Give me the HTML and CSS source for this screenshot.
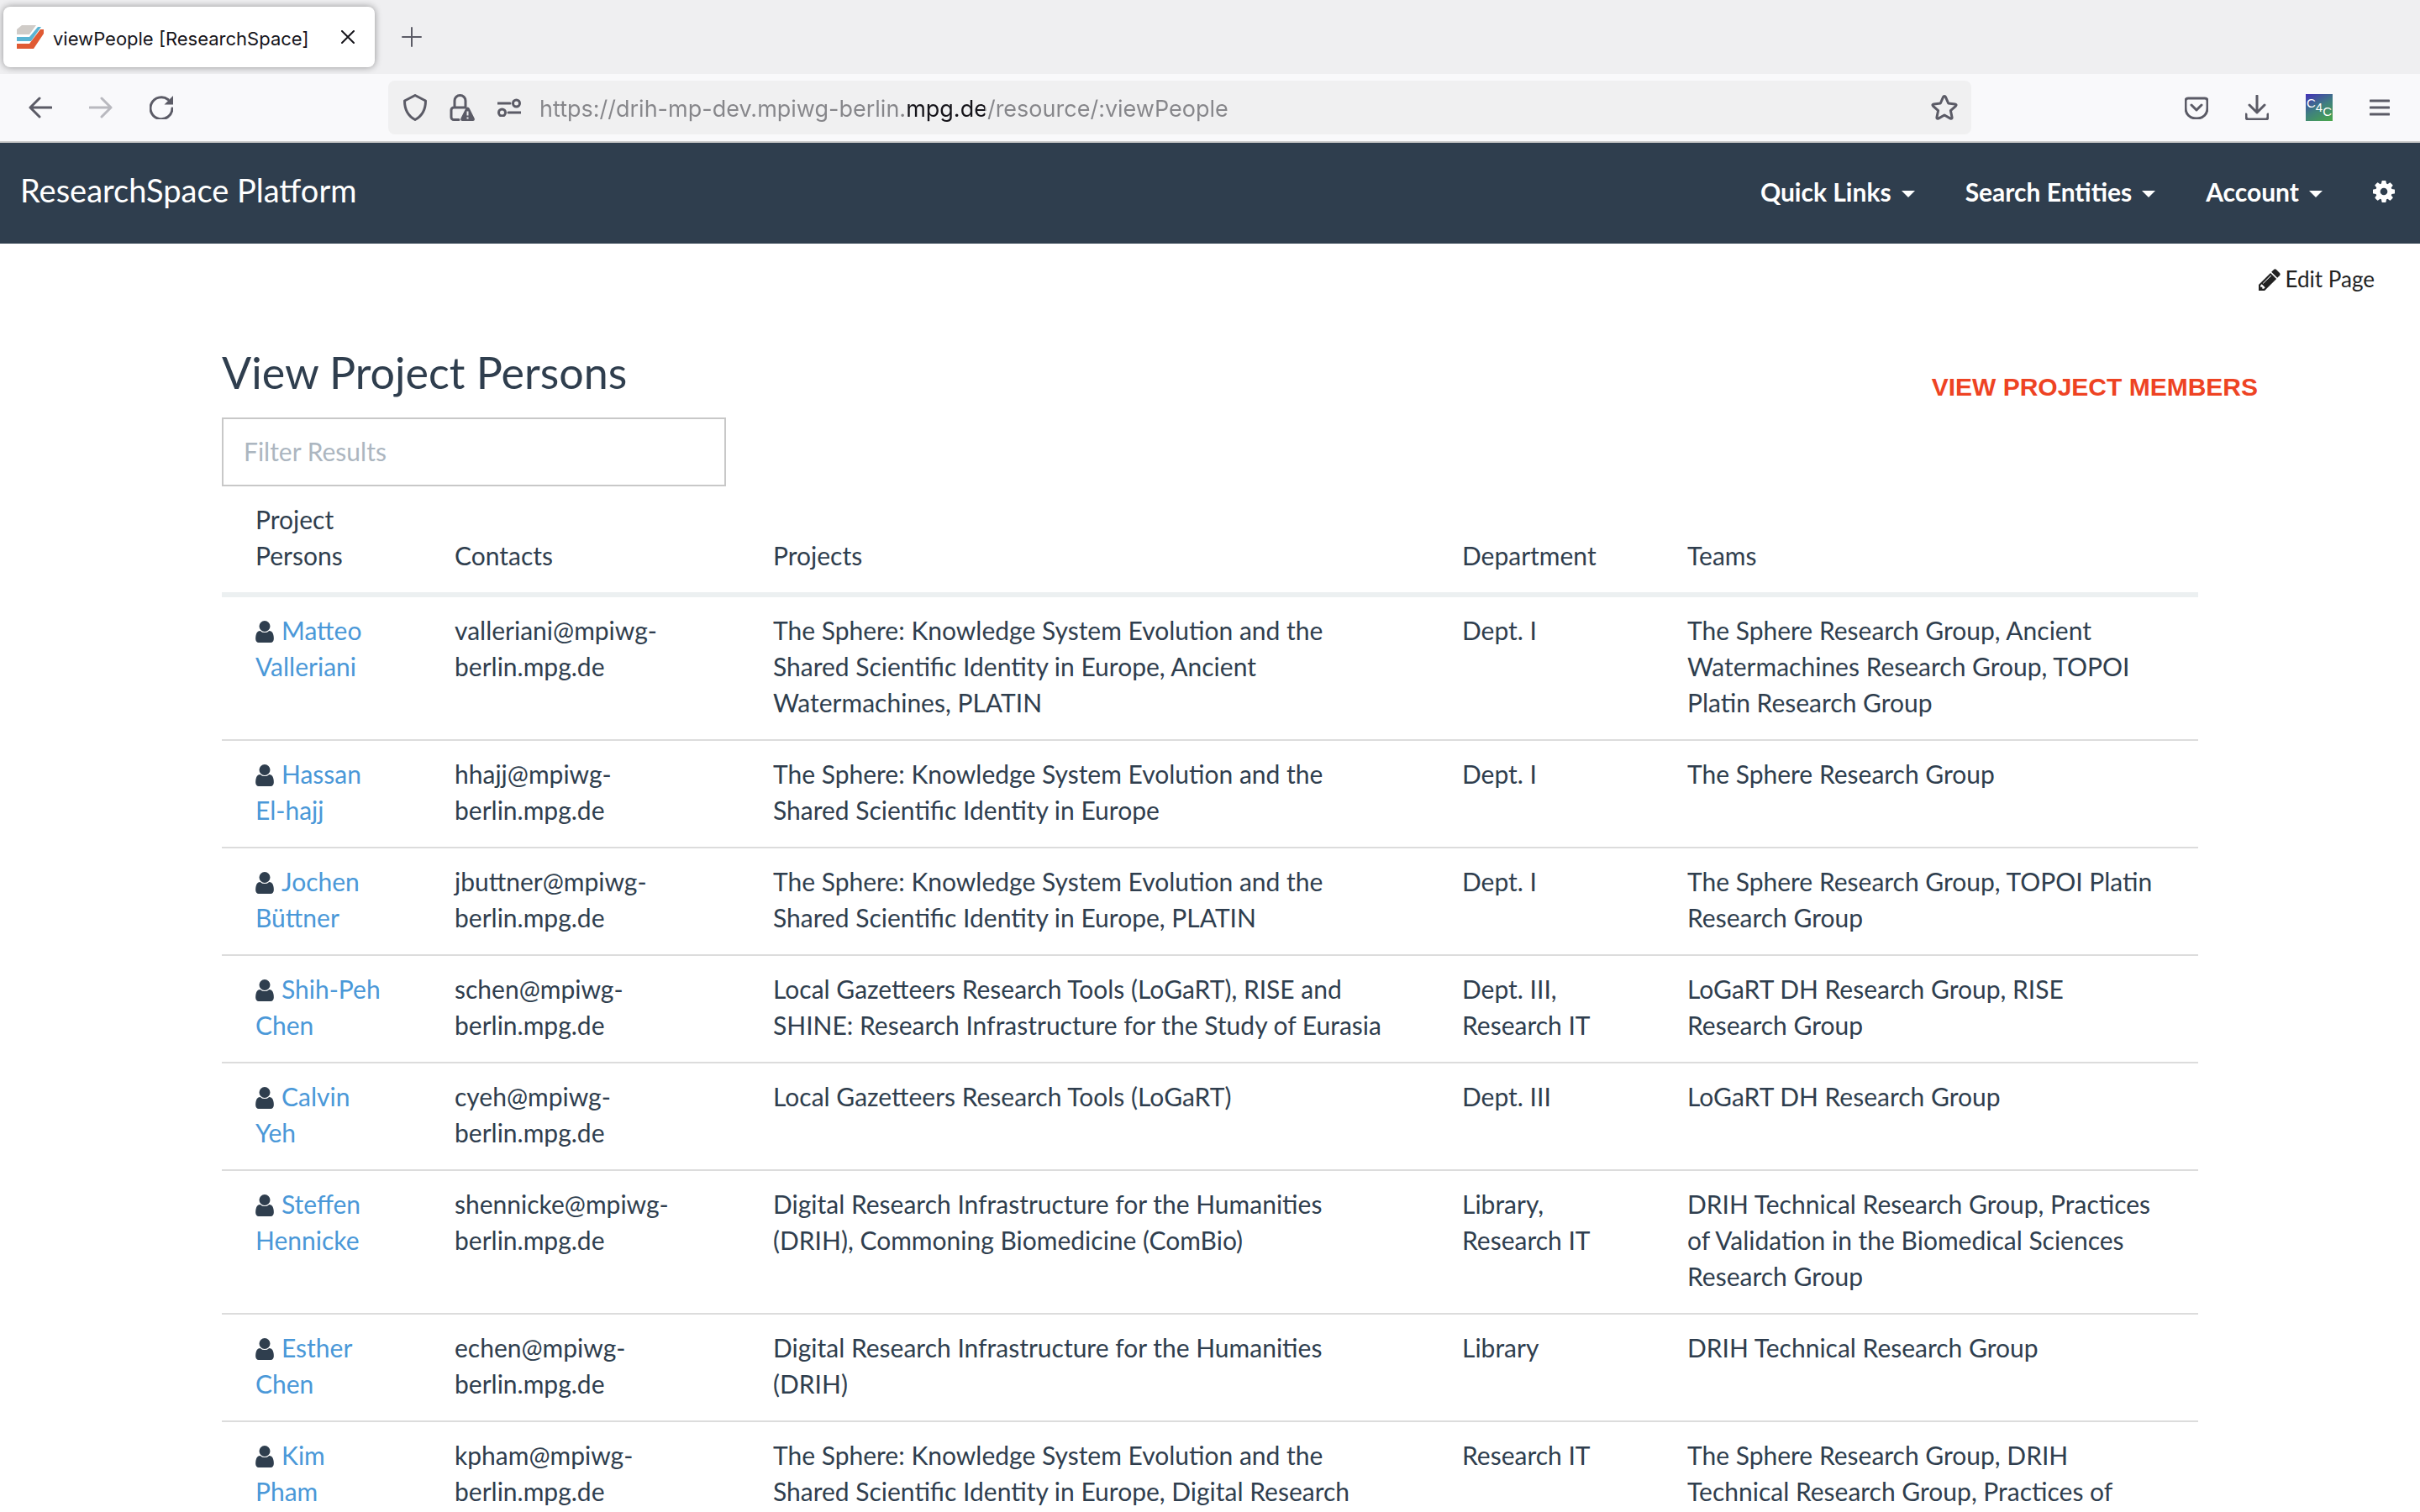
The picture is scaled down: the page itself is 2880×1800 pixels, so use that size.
FILE: index.html
```html
<!DOCTYPE html>
<html lang="en">
<head>
<meta charset="utf-8">
<title>viewPeople [ResearchSpace]</title>
<link rel="stylesheet" href="styles.css">
</head>
<body>
<svg class="sprite" aria-hidden="true">
  <symbol id="user" viewBox="256 128 1280 1536"><path d="M1536 1399q0 109-62.5 187t-150.5 78h-854q-88 0-150.5-78t-62.5-187q0-85 8.5-160.5t31.5-152 58.5-131 94-89 134.5-34.5q131 128 313 128t313-128q76 0 134.5 34.5t94 89 58.5 131 31.5 152 8.5 160.5zm-256-887q0 159-112.5 271.5t-271.5 112.5-271.5-112.5-112.5-271.5 112.5-271.5 271.5-112.5 271.5 112.5 112.5 271.5z"/></symbol>
</svg>

<div class="tabstrip">
  <div class="tab">
    <svg class="favicon" width="32" height="28" viewBox="0 0 32 28" aria-hidden="true">
      <path fill="#d0ccc8" d="M6 0h17l-8 11H0V5z"/>
      <path fill="#5ab4d3" d="M0 14h15L25 2h4L17 19H0z"/>
      <path fill="#e05a33" d="M0 22h15L28 5h4v5L20 28H0z"/>
    </svg>
    <span class="tab-title">viewPeople [ResearchSpace]</span>
    <button class="icon-btn" aria-label="Close tab">
      <svg width="16" height="16" viewBox="0 0 16 16"><path d="M1 1l14 14M15 1L1 15" stroke="#15141a" stroke-width="2" fill="none" stroke-linecap="round"/></svg>
    </button>
  </div>
  <button class="icon-btn" aria-label="New tab">
    <svg width="24" height="24" viewBox="0 0 24 24"><path d="M12 1v22M1 12h22" stroke="#5b5b66" stroke-width="2" fill="none" stroke-linecap="round"/></svg>
  </button>
</div>

<div class="toolbar">
  <div class="history">
    <button class="icon-btn" aria-label="Back"><svg width="28" height="28" viewBox="0 0 28 28"><path d="M27 14H2M13 3L2 14l11 11" class="line"/></svg></button>
    <button class="icon-btn faded" aria-label="Forward"><svg width="28" height="28" viewBox="0 0 28 28"><path d="M1 14h25M15 3l11 11-11 11" class="line"/></svg></button>
    <button class="icon-btn" aria-label="Reload"><svg width="28" height="28" viewBox="0 0 28 28"><path d="M22 4.500A13 13 0 1 0 27 15" class="line"/><path d="M28 0v10.500H17.500z" fill="#5b5b66"/></svg></button>
  </div>
  <div class="urlbar">
    <div class="site-icons">
      <svg width="28" height="32" viewBox="0 0 28 32" aria-hidden="true"><path d="M14 1.500L26.500 8c0 11-4 18-12.500 22.500C5.500 26 1.500 19 1.500 8z" class="line"/></svg>
      <svg width="32" height="32" viewBox="0 0 32 32" aria-hidden="true"><path d="M12 30.500H6a3 3 0 0 1-3-3V19a3 3 0 0 1 3-3h14M7 16V8a6.500 6.500 0 0 1 13 0v8" class="line"/><path d="M22.500 15.500q1.500 0 2.200 1.500l6 12q.8 3-2 3H16.300q-2.800 0-2-3l6-12q.7-1.500 2.200-1.500z" fill="#5b5b66"/><path d="M22.500 20.500v5M22.500 27.500v2" stroke="#f0f0f1" stroke-width="2"/></svg>
      <svg width="28" height="22" viewBox="0 0 28 22" aria-hidden="true"><path d="M0 6h15M13 17h15" class="line"/><circle cx="22.500" cy="6" r="4" class="line"/><circle cx="5.500" cy="17" r="4" class="line"/></svg>
    </div>
    <input class="url" type="text" aria-label="Address" value="https://drih-mp-dev.mpiwg-berlin.mpg.de/resource/:viewPeople">
    <button class="icon-btn" aria-label="Bookmark"><svg width="32" height="32" viewBox="0 0 32 32"><path d="M16 2.500q1 0 1.500 1.200l3.200 7.300 8 .9q2.400.5.700 2.400l-6 5.400 1.700 8q.2 2.200-1.900 1.400L16 25l-7.200 4.100q-2.100.8-1.900-1.400l1.700-8-6-5.400q-1.700-1.900.7-2.400l8-.9 3.200-7.300Q15 2.500 16 2.500z" class="line"/></svg></button>
  </div>
  <div class="actions">
    <button class="icon-btn" aria-label="Save to Pocket"><svg width="28" height="28" viewBox="0 0 28 28"><path d="M4 3h20q3 0 3 3v8c0 8-5 13-13 13S1 22 1 14V6q0-3 3-3z M8 11l6 6 6-6" class="line"/></svg></button>
    <button class="icon-btn" aria-label="Downloads"><svg width="28" height="30" viewBox="0 0 28 30"><path d="M14 1v20M5 12l9 9 9-9M1 23v3q0 3 3 3h20q3 0 3-3v-3" class="line"/></svg></button>
    <button class="icon-btn extension" aria-label="C4C extension"><span class="up">C</span><span>4</span><span class="down">C</span></button>
    <button class="icon-btn" aria-label="Menu"><svg width="24" height="20" viewBox="0 0 24 20"><path d="M1 2h22M1 10h22M1 18h22" class="line"/></svg></button>
  </div>
</div>

<nav class="navbar">
  <a class="brand" href="#">ResearchSpace Platform</a>
  <div class="menu">
    <button class="menu-item">Quick Links<span class="caret"></span></button>
    <button class="menu-item">Search Entities<span class="caret"></span></button>
    <button class="menu-item">Account<span class="caret"></span></button>
    <button class="menu-item" aria-label="Settings"><svg width="26" height="26" viewBox="128 128 1536 1536" fill="#fff"><path d="M1152 896q0-106-75-181t-181-75-181 75-75 181 75 181 181 75 181-75 75-181zm512-109v222q0 12-8 23t-20 13l-185 28q-19 54-39 91 35 50 107 138 10 12 10 25t-9 23q-27 37-99 108t-94 71q-12 0-26-9l-138-108q-44 23-91 38-16 136-29 186-7 28-36 28h-222q-14 0-24.500-8.500t-11.500-21.500l-28-184q-49-16-90-37l-141 107q-10 9-25 9-14 0-25-11-126-114-165-168-7-10-7-23 0-12 8-23 15-21 51-66.500t54-70.500q-27-50-41-99l-183-27q-13-2-21-12.500t-8-23.500v-222q0-12 8-23t19-13l186-28q14-46 39-92-40-57-107-138-10-12-10-24 0-10 9-23 26-36 98.500-107.500t94.500-71.500q13 0 26 10l138 107q44-23 91-38 16-136 29-186 7-28 36-28h222q14 0 24.500 8.500t11.500 21.500l28 184q49 16 90 37l142-107q9-9 24-9 13 0 25 10 129 119 165 170 7 8 7 22 0 12-8 23-15 21-51 66.500t-54 70.500q26 50 41 98l183 28q13 2 21 12.500t8 23.500z"/></svg></button>
  </div>
</nav>

<main>
  <div class="page-tools">
    <a class="edit" href="#"><svg width="26" height="26" viewBox="128 128 1536 1536" fill="#222" aria-hidden="true"><path d="M491 1536l91-91-235-235-91 91v107h128v128h107zm523-928q0-22-22-22-10 0-17 7l-542 542q-7 7-7 17 0 22 22 22 10 0 17-7l542-542q7-7 7-17zm-54-192l416 416-832 832h-416v-416zm683 96q0 53-37 90l-166 166-416-416 166-165q36-38 90-38 53 0 91 38l235 234q37 39 37 91z"/></svg>Edit Page</a>
  </div>
  <header class="page-head">
    <h1>View Project Persons</h1>
    <strong class="callout">VIEW PROJECT MEMBERS</strong>
  </header>
  <div class="results">
    <input class="filter" type="text" aria-label="Filter results" placeholder="Filter Results">
    <table>
      <colgroup><col class="c-person"><col class="c-contact"><col class="c-project"><col class="c-dept"><col class="c-team"></colgroup>
      <thead>
        <tr><th>Project Persons</th><th>Contacts</th><th>Projects</th><th>Department</th><th>Teams</th></tr>
      </thead>
      <tbody>
        <tr><td><svg class="user"><use href="#user"/></svg><a href="#">Matteo Valleriani</a></td><td>valleriani@mpiwg-berlin.mpg.de</td><td>The Sphere: Knowledge System Evolution and the Shared Scientific Identity in Europe, Ancient Watermachines, PLATIN</td><td>Dept. I</td><td>The Sphere Research Group, Ancient Watermachines Research Group, TOPOI Platin Research Group</td></tr>
        <tr><td><svg class="user"><use href="#user"/></svg><a href="#">Hassan El-hajj</a></td><td>hhajj@mpiwg-berlin.mpg.de</td><td>The Sphere: Knowledge System Evolution and the Shared Scientific Identity in Europe</td><td>Dept. I</td><td>The Sphere Research Group</td></tr>
        <tr><td><svg class="user"><use href="#user"/></svg><a href="#">Jochen Büttner</a></td><td>jbuttner@mpiwg-berlin.mpg.de</td><td>The Sphere: Knowledge System Evolution and the Shared Scientific Identity in Europe, PLATIN</td><td>Dept. I</td><td>The Sphere Research Group, TOPOI Platin Research Group</td></tr>
        <tr><td><svg class="user"><use href="#user"/></svg><a href="#">Shih-Peh Chen</a></td><td>schen@mpiwg-berlin.mpg.de</td><td>Local Gazetteers Research Tools (LoGaRT), RISE and SHINE: Research Infrastructure for the Study of Eurasia</td><td>Dept. III, Research IT</td><td>LoGaRT DH Research Group, RISE Research Group</td></tr>
        <tr><td><svg class="user"><use href="#user"/></svg><a href="#">Calvin Yeh</a></td><td>cyeh@mpiwg-berlin.mpg.de</td><td>Local Gazetteers Research Tools (LoGaRT)</td><td>Dept. III</td><td>LoGaRT DH Research Group</td></tr>
        <tr><td><svg class="user"><use href="#user"/></svg><a href="#">Steffen Hennicke</a></td><td>shennicke@mpiwg-berlin.mpg.de</td><td>Digital Research Infrastructure for the Humanities (DRIH), Commoning Biomedicine (ComBio)</td><td>Library, Research IT</td><td>DRIH Technical Research Group, Practices of Validation in the Biomedical Sciences Research Group</td></tr>
        <tr><td><svg class="user"><use href="#user"/></svg><a href="#">Esther Chen</a></td><td>echen@mpiwg-berlin.mpg.de</td><td>Digital Research Infrastructure for the Humanities (DRIH)</td><td>Library</td><td>DRIH Technical Research Group</td></tr>
        <tr><td><svg class="user"><use href="#user"/></svg><a href="#">Kim Pham</a></td><td>kpham@mpiwg-berlin.mpg.de</td><td>The Sphere: Knowledge System Evolution and the Shared Scientific Identity in Europe, Digital Research</td><td>Research IT</td><td>The Sphere Research Group, DRIH Technical Research Group, Practices of</td></tr>
      </tbody>
    </table>
  </div>
</main>
</body>
</html>
```

FILE: styles.css
```css
*, *::before, *::after { box-sizing: border-box; }

body {
  margin: 0;
  height: 100vh;
  display: flex;
  flex-direction: column;
  overflow: hidden;
  background: #fff;
  color: #2f3e4e;
  font-family: Lato, "Liberation Sans", sans-serif;
  font-size: 30px;
  line-height: 43px;
}

svg { display: block; flex: none; }
.sprite { position: absolute; width: 0; height: 0; }
.line {
  fill: none;
  stroke: #5b5b66;
  stroke-width: 3;
  stroke-linecap: round;
  stroke-linejoin: round;
}
.icon-btn {
  display: flex;
  align-items: center;
  justify-content: center;
  flex: none;
  padding: 0;
  border: 0;
  background: none;
}
.faded { opacity: 0.4; }

/* Browser tab strip */
.tabstrip {
  flex: none;
  display: flex;
  align-items: center;
  gap: 32px;
  height: 88px;
  padding: 0 4px;
  background: #efeff1;
}
.tab {
  display: flex;
  align-items: center;
  gap: 11px;
  width: 442px;
  height: 72px;
  padding: 0 24px 0 16px;
  border-radius: 8px;
  background: #fff;
  box-shadow: 0 0 8px rgba(0, 0, 0, 0.4);
}
.tab-title {
  flex: 1;
  padding-top: 4px;
  color: #15141a;
  font: 22px/32px Inter, "Liberation Sans", sans-serif;
  white-space: nowrap;
}

/* Address toolbar */
.toolbar {
  flex: none;
  display: flex;
  align-items: center;
  height: 82px;
  padding: 0 36px 0 34px;
  border-bottom: 2px solid #ccc;
  background: #f9f9fb;
}
.history { display: flex; gap: 44px; width: 428px; }
.urlbar {
  flex: 1;
  display: flex;
  align-items: center;
  height: 64px;
  padding: 0 16px 0 18px;
  border-radius: 8px;
  background: #f0f0f1;
}
.site-icons { display: flex; align-items: center; gap: 26px; margin-right: 22px; }
.url {
  flex: 1;
  min-width: 0;
  height: 42px;
  padding: 2px 0 0;
  border: 0;
  outline: 0;
  /* the registered domain is darker than the rest of the address */
  background: linear-gradient(90deg, #86868a 436px, #15141a 436px 530px, #86868a 530px);
  -webkit-background-clip: text;
  background-clip: text;
  -webkit-text-fill-color: transparent;
  font: 27px/40px Inter, "Liberation Sans", sans-serif;
}
.actions { display: flex; align-items: center; gap: 44px; margin-left: 254px; }
.extension {
  width: 32px;
  height: 32px;
  background: linear-gradient(150deg, #4430b8, #3f7f80 50%, #48a848);
  color: #fff;
  font: 15px/18px "Liberation Sans", sans-serif;
}
.extension .up { padding-bottom: 10px; }
.extension .down { padding-top: 10px; }

/* Platform navigation */
.navbar {
  flex: none;
  display: flex;
  align-items: center;
  justify-content: space-between;
  height: 120px;
  padding: 0 30px 4px 24px;
  background: #2f3e4e;
}
.brand { padding-bottom: 4px; color: #fff; font-size: 38px; text-decoration: none; }
.menu { display: flex; align-items: center; gap: 60px; }
.menu-item {
  display: flex;
  align-items: center;
  gap: 12px;
  padding: 0;
  border: 0;
  background: none;
  color: #fff;
  font: bold 30px/43px Lato, "Liberation Sans", sans-serif;
}
.caret {
  margin-top: 6px;
  border: 8px solid transparent;
  border-top-color: #fff;
  border-bottom: 0;
}

/* Page */
main { flex: 1; min-height: 0; overflow: hidden; padding-top: 24px; }
.page-tools { display: flex; justify-content: flex-end; padding: 0 54px; }
.edit {
  display: flex;
  align-items: center;
  gap: 6px;
  color: #222;
  font-size: 26px;
  line-height: 37px;
  text-decoration: none;
}
.page-head {
  display: flex;
  align-items: flex-end;
  justify-content: space-between;
  padding: 61px 193px 18px 264px;
}
h1 { margin: 0 0 5px; font-size: 52px; font-weight: 400; line-height: 62px; }
.callout {
  color: #ee4323;
  font: bold 30px/36px "Liberation Sans", sans-serif;
}
.results { padding: 0 264px; }
.filter {
  display: block;
  width: 600px;
  height: 82px;
  padding: 0 24px 2px;
  border: 2px solid #c8c8c8;
  outline: 0;
  background: #fff;
  color: inherit;
  font: inherit;
}
.filter::placeholder { color: #acb6c0; opacity: 1; }

table { width: 100%; table-layout: fixed; border-collapse: separate; border-spacing: 0; }
.c-person { width: 237px; }
.c-contact { width: 379px; }
.c-project { width: 820px; }
.c-dept { width: 268px; }
th, td { padding: 18px 40px 22px; text-align: left; }
th { vertical-align: bottom; border-bottom: 6px solid #ecf0f1; font-weight: 400; }
td { vertical-align: top; border-bottom: 2px solid #dcdcdc; }
td a { color: #4a98d8; text-decoration: none; }
.user {
  display: inline-block;
  width: 22px;
  height: 26px;
  margin-right: 9px;
  vertical-align: -3px;
  fill: #2f3e4e;
}
```
